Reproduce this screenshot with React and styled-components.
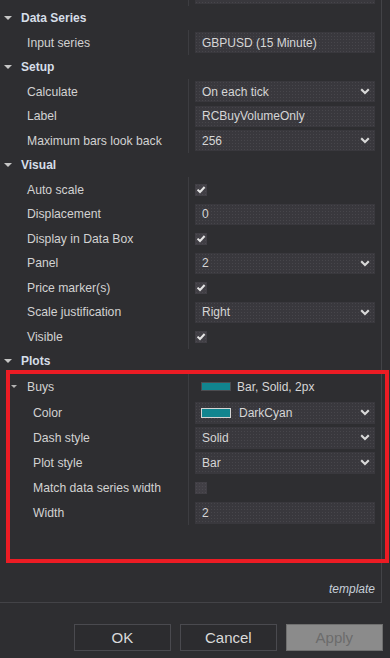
import React from "react";
import styled, { createGlobalStyle } from "styled-components";

const GlobalStyle = createGlobalStyle`
  html, body {
    margin: 0;
    padding: 0;
    background: #2e2e31;
  }
  body {
    font-family: "Liberation Sans", Arial, sans-serif;
  }
`;

const Window = styled.div`
  position: relative;
  width: 390px;
  height: 658px;
  display: flex;
  flex-direction: column;
  background: #2e2e31;
  overflow: hidden;
`;

const Panel = styled.div`
  width: 382px;
  height: 603px;
  box-sizing: border-box;
  border-right: 1px solid #434347;
  border-bottom: 1px solid #434347;
  display: flex;
  flex-direction: column;
`;

const Grid = styled.div`
  flex: 1;
  overflow: hidden;
`;

const Rows = styled.div`
  display: flex;
  flex-direction: column;
  margin-top: -18.75px;
`;

const Row = styled.div`
  display: grid;
  grid-template-columns: 189px 1fr;
  height: ${(p) => p.$h || 24.5}px;
  flex-shrink: 0;
`;

const Name = styled.div`
  box-sizing: border-box;
  border-right: 1px solid #3d3d41;
  display: flex;
  align-items: center;
  gap: 10px;
  padding-left: ${(p) => p.$indent}px;
  color: #d2d2d2;
  font-size: 12.2px;
  white-space: nowrap;
`;

const Value = styled.div`
  padding: 0 6px;
  display: flex;
  align-items: center;
  min-width: 0;
  color: #d6d6d6;
  font-size: 12px;
`;

const CategoryRow = styled.div`
  height: 24.5px;
  flex-shrink: 0;
  display: flex;
  align-items: center;
  gap: 9px;
  padding-left: 4px;
  color: #d6dee8;
  font-size: 12px;
  font-weight: bold;
`;

const Arrow = styled.span`
  width: 0;
  height: 0;
  border-left: ${(p) => (p.$small ? 3 : 4)}px solid transparent;
  border-right: ${(p) => (p.$small ? 3 : 4)}px solid transparent;
  border-top: ${(p) => (p.$small ? 3.5 : 4.5)}px solid ${(p) => (p.$small ? "#b4b4b4" : "#c6c6c6")};
`;

const Field = styled.div`
  flex: 1;
  height: ${(p) => p.$h || 21}px;
  box-sizing: border-box;
  display: flex;
  align-items: center;
  gap: 8px;
  padding: 0 5px 0 ${(p) => (p.$swatch ? 6 : 7)}px;
  background-color: #39383d;
  background-image: radial-gradient(rgba(255, 255, 255, 0.07) 0.7px, transparent 0.9px);
  background-size: 3px 3px;
  color: #d6d6d6;
  font-size: 12px;
  white-space: nowrap;
`;

const FieldText = styled.span`
  flex: 1;
`;

const Check = styled.div`
  width: 12px;
  height: 12px;
  display: grid;
  place-items: center;
  background-color: #413f45;
  background-image: radial-gradient(rgba(255, 255, 255, 0.06) 0.7px, transparent 0.9px);
  background-size: 3px 3px;
`;

const Swatch = styled.span`
  width: 30px;
  height: ${(p) => (p.$light ? 10 : 9)}px;
  box-sizing: border-box;
  flex-shrink: 0;
  background: #11858f;
  border: 1px solid ${(p) => (p.$light ? "#d4d4d4" : "#4c4c50")};
  margin-left: ${(p) => p.$ml || 0}px;
`;

const Summary = styled.span`
  margin-left: 6px;
  color: #d6d6d6;
  white-space: nowrap;
`;

const Description = styled.div`
  height: 27px;
  display: flex;
  align-items: center;
  justify-content: flex-end;
  padding-right: 6px;
  color: #c7cfd8;
  font-size: 12px;
  font-style: italic;
`;

const ButtonBar = styled.div`
  display: flex;
  justify-content: flex-end;
  gap: 8.6px;
  padding: 21px 7px 0 0;
`;

const Button = styled.button`
  width: 97.4px;
  height: 27px;
  box-sizing: border-box;
  border: 1px solid ${(p) => (p.$disabled ? "#6f6f6f" : "#4a4a4f")};
  background: ${(p) => (p.$disabled ? "#8b8b8b" : "#2c2c2f")};
  color: ${(p) => (p.$disabled ? "#6c6c6c" : "#dadada")};
  font-family: "Liberation Sans", Arial, sans-serif;
  font-size: 15px;
  padding: 0;
`;

const Highlight = styled.div`
  position: absolute;
  left: 6px;
  top: 370px;
  width: 383px;
  height: 193px;
  box-sizing: border-box;
  border: 4.5px solid #ec1c24;
  pointer-events: none;
`;

const Chevron = () => (
  <svg width="10" height="7" viewBox="0 0 10 7">
    <path d="M1.2 1.3 L5 5 L8.8 1.3" fill="none" stroke="#d8d8d8" strokeWidth="2.2" />
  </svg>
);

const Tick = () => (
  <svg width="10" height="9" viewBox="0 0 10 9">
    <path d="M1.5 4.6 L4 7 L8.6 2" fill="none" stroke="#e4e4e4" strokeWidth="2" />
  </svg>
);

const renderValue = (v) => {
  if (v.kind === "check") return <Check>{v.on && <Tick />}</Check>;
  if (v.kind === "summary")
    return (
      <>
        <Swatch $ml={6} />
        <Summary>{v.text}</Summary>
      </>
    );
  return (
    <Field $h={v.h} $swatch={v.swatch}>
      {v.swatch && <Swatch $light />}
      <FieldText>{v.text}</FieldText>
      {v.kind === "select" && <Chevron />}
    </Field>
  );
};

const sections = [
  {
    title: "Data Series",
    props: [{ name: "Input series", value: { kind: "text", text: "GBPUSD (15 Minute)" } }],
  },
  {
    title: "Setup",
    props: [
      { name: "Calculate", value: { kind: "select", text: "On each tick" } },
      { name: "Label", value: { kind: "text", text: "RCBuyVolumeOnly" } },
      { name: "Maximum bars look back", value: { kind: "select", text: "256" } },
    ],
  },
  {
    title: "Visual",
    props: [
      { name: "Auto scale", value: { kind: "check", on: true } },
      { name: "Displacement", value: { kind: "text", text: "0" } },
      { name: "Display in Data Box", value: { kind: "check", on: true } },
      { name: "Panel", value: { kind: "select", text: "2" } },
      { name: "Price marker(s)", value: { kind: "check", on: true } },
      { name: "Scale justification", value: { kind: "select", text: "Right" } },
      { name: "Visible", value: { kind: "check", on: true } },
    ],
  },
  {
    title: "Plots",
    props: [
      { name: "Buys", group: true, h: 27, value: { kind: "summary", text: "Bar, Solid, 2px" } },
      { name: "Color", indent: 33, h: 25, value: { kind: "select", text: "DarkCyan", swatch: true, h: 22 } },
      { name: "Dash style", indent: 33, h: 25, value: { kind: "select", text: "Solid", h: 22 } },
      { name: "Plot style", indent: 33, h: 25, value: { kind: "select", text: "Bar", h: 22 } },
      { name: "Match data series width", indent: 33, h: 25, value: { kind: "check", on: false } },
      { name: "Width", indent: 33, h: 25, value: { kind: "text", text: "2", h: 22 } },
    ],
  },
];

export default function App() {
  return (
    <Window>
      <GlobalStyle />
      <Panel>
        <Grid>
          <Rows>
            <Row>
              <Name $indent={27} />
              <Value>
                <Field />
              </Value>
            </Row>
            {sections.map((s) => (
              <React.Fragment key={s.title}>
                <CategoryRow>
                  <Arrow />
                  {s.title}
                </CategoryRow>
                {s.props.map((p) => (
                  <Row key={p.name} $h={p.h}>
                    <Name $indent={p.group ? 11 : p.indent || 27}>
                      {p.group && <Arrow $small />}
                      {p.name}
                    </Name>
                    <Value>{renderValue(p.value)}</Value>
                  </Row>
                ))}
              </React.Fragment>
            ))}
          </Rows>
        </Grid>
        <Description>template</Description>
      </Panel>
      <ButtonBar>
        <Button>OK</Button>
        <Button>Cancel</Button>
        <Button $disabled>Apply</Button>
      </ButtonBar>
      <Highlight />
    </Window>
  );
}
